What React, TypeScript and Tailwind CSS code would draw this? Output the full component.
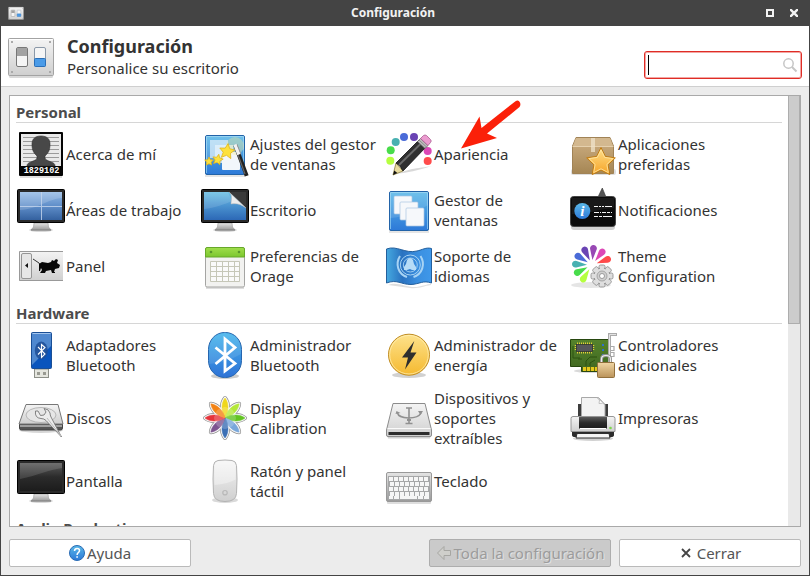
import React from "react";
import type { ReactNode } from "react";

const starPoints = (cx: number, cy: number, r: number, inner = 0.48, turn = 0) =>
  Array.from({ length: 10 }, (_, i) => {
    const a = ((i * 36 - 90 + turn) * Math.PI) / 180;
    const d = i % 2 ? r * inner : r;
    return `${(cx + d * Math.cos(a)).toFixed(1)},${(cy + d * Math.sin(a)).toFixed(1)}`;
  }).join(" ");

function Gradient({ id, from, to, mid }: { id: string; from: string; to: string; mid?: string }) {
  return (
    <linearGradient id={id} x1="0" y1="0" x2="0" y2="1">
      <stop offset="0" stopColor={from} />
      {mid && <stop offset="0.5" stopColor={mid} />}
      <stop offset="1" stopColor={to} />
    </linearGradient>
  );
}

function Gradients() {
  return (
    <svg width="0" height="0" className="absolute" aria-hidden="true">
      <defs>
        <Gradient id="blue" from="#5bb9e8" to="#2d79d8" />
        <Gradient id="space" from="#94bae5" mid="#5f8ec9" to="#34619f" />
        <Gradient id="desk" from="#6cc0e4" mid="#4a92cf" to="#2c68b6" />
        <Gradient id="dark" from="#5a5a5a" mid="#2b2b2b" to="#1c1c1c" />
        <Gradient id="silver" from="#f4f4f4" to="#cfcfcf" />
        <Gradient id="steel" from="#e4e4e4" to="#9a9a9a" />
        <Gradient id="gold" from="#ffe08a" to="#f6a326" />
        <Gradient id="power" from="#fde28c" to="#f5b92f" />
        <Gradient id="card" from="#cfb084" to="#a58654" />
        <Gradient id="lock" from="#f0d6a4" to="#bb935a" />
        <Gradient id="green" from="#a0de4c" to="#7cc62e" />
        <Gradient id="board" from="#55832c" to="#3f6620" />
        <Gradient id="bt" from="#46b6ec" to="#2f72d6" />
        <linearGradient id="flag" x1="0" y1="0" x2="1" y2="0">
          <stop offset="0" stopColor="#45a9e0" />
          <stop offset="0.35" stopColor="#2a72c0" />
          <stop offset="0.7" stopColor="#3a8fe0" />
          <stop offset="1" stopColor="#3f98ea" />
        </linearGradient>
      </defs>
    </svg>
  );
}

function Art({ children, className = "size-12" }: { children: ReactNode; className?: string }) {
  return (
    <svg viewBox="0 0 48 48" className={`${className} shrink-0 overflow-visible`} aria-hidden="true">
      {children}
    </svg>
  );
}

function SettingsIcon({ className }: { className?: string }) {
  return (
    <Art className={className}>
      <rect x="2" y="8" width="44" height="38" rx="1.5" fill="#000" opacity="0.15" />
      <rect x="1.5" y="6.5" width="45" height="37" rx="1" fill="url(#silver)" stroke="#a3a3a3" />
      <path d="M2.5 7.5h43" stroke="#fff" />
      {[[5, 10], [43, 10], [5, 40], [43, 40]].map(([x, y]) => (
        <rect key={`${x}-${y}`} x={x - 1} y={y - 1} width="2" height="2" fill="#aaa" />
      ))}
      <rect x="9.5" y="15.5" width="11" height="19" rx="1.5" fill="#f5f5f5" stroke="#777" />
      <rect x="10" y="16" width="10" height="8" fill="#a2a2a2" />
      <rect x="27.5" y="15.5" width="11" height="19" rx="1.5" fill="#f5f5f5" stroke="#8a98a8" />
      <rect x="27.5" y="26.5" width="11" height="8" rx="1" fill="#4a9be8" stroke="#2a6fb8" />
    </Art>
  );
}

function AboutIcon() {
  return (
    <Art>
      <rect x="3" y="42" width="42" height="5" fill="#000" opacity="0.12" />
      <rect x="2" y="1" width="44" height="44" rx="1" fill="#050505" />
      <rect x="4" y="3" width="40" height="32" fill="#e9e9e9" />
      <path d="M6 6.5h36M6 10.5h36M6 14.5h36M6 18.5h36M6 22.5h36M6 26.5h36M6 30.5h36" stroke="#9a9a9a" />
      <path d="M24 5c-6 0-9 3-9 8 0 7 2 9 5 12 .5 4-2 4-6 6-3 1-4 2-4 4h28c0-2-1-3-4-4-4-2-6.5-2-6-6 3-3 5-5 5-12 0-5-3-8-9-8z" fill="#484848" stroke="#2e2e2e" strokeWidth="0.6" />
      <text x="24.5" y="42" textAnchor="middle" fontFamily="Liberation Mono, monospace" fontWeight="700" fontSize="8.5" fill="#fff">1829102</text>
    </Art>
  );
}

function Monitor({ screen, children }: { screen: string; children?: ReactNode }) {
  return (
    <Art>
      <ellipse cx="24" cy="43" rx="12" ry="2" fill="#000" opacity="0.15" />
      <path d="M17 36h14l.5 4 2.500 3H14l2.500-3z" fill="url(#steel)" stroke="#999" strokeWidth="0.6" />
      <path d="M14 43h20" stroke="#888" strokeWidth="1.2" />
      <rect x="0.5" y="2.5" width="47" height="33" rx="1" fill="#2a2a2a" stroke="#000" />
      <rect x="3" y="5" width="42" height="28" fill={screen} />
      {children}
    </Art>
  );
}

function WorkspacesIcon() {
  return (
    <Monitor screen="url(#space)">
      <path d="M3 5h42v6C30 12 22 22 3 23z" fill="#fff" opacity="0.16" />
      <path d="M24.500 5v28M3 19.500h42" stroke="#c6d7ee" strokeWidth="1" opacity="0.8" />
    </Monitor>
  );
}

function DesktopIcon() {
  return (
    <Monitor screen="url(#desk)">
      <path d="M3 5h24l4 9C24 17 14 21 3 22z" fill="#fff" opacity="0.12" />
      <path d="M28 5h17v16z" fill="#3a3a3a" />
      <path d="M28 5c4 3 2 8 2 12 5-1 10 0 15 4z" fill="#ededed" stroke="#b5b5b5" strokeWidth="0.5" />
    </Monitor>
  );
}

function DisplayIcon() {
  return (
    <Monitor screen="url(#dark)">
      <path d="M3 5h42v5C31 12 22 17 3 21z" fill="#fff" opacity="0.13" />
    </Monitor>
  );
}

function PanelIcon() {
  return (
    <Art>
      <rect x="2" y="8" width="44" height="30" fill="url(#silver)" />
      <path d="M46 8.500H2.500v29H46" fill="none" stroke="#999" />
      <rect x="4.500" y="10.500" width="10" height="25" rx="1.5" fill="#e6e6e6" stroke="#959595" />
      <path d="M11 20v5l-3-2.500z" fill="#111" />
      <path d="M16 16l6 4 2 3" stroke="#333" strokeWidth="1" fill="none" />
      <path d="M22 21l3-2 6 1 3-1 1-2 2 1 2-2 2 1-1 3 3 2-1 3-4 1-1 3h1v1h-3l-1-3-5 1-1 2h-5l2-3-1-2-1 3h-1z" fill="#080808" />
    </Art>
  );
}

function BlueTile() {
  return (
    <>
      <rect x="4" y="42" width="40" height="4" fill="#000" opacity="0.1" />
      <rect x="4.500" y="4.500" width="39" height="39" rx="1.5" fill="url(#blue)" stroke="#2263a8" />
      <path d="M5.500 42V5.500h37V42" fill="none" stroke="#9bd6f4" opacity="0.7" />
      <path d="M5 5h38v13C32 25 20 30 5 31z" fill="#fff" opacity="0.12" />
    </>
  );
}

function WindowTweaksIcon() {
  return (
    <Art>
      <BlueTile />
      <rect x="9" y="9" width="18" height="18" fill="#e4f1fb" opacity="0.7" />
      <rect x="14" y="14" width="18" height="18" fill="#e4f1fb" opacity="0.8" />
      <rect x="21" y="21" width="18" height="18" rx="1" fill="#f2f6fb" />
      <circle cx="34" cy="15" r="9" fill="#f8ef92" opacity="0.35" />
      {[[26, 20.5, 8, 8], [16.7, 28.7, 5.5, 12], [8, 30.5, 4.5, 0]].map(([x, y, r, t]) => (
        <polygon key={x} points={starPoints(x, y, r, 0.48, t)} fill="#fde13d" stroke="#dfb41c" strokeWidth="0.8" />
      ))}
      <path d="M35 16l10 27" stroke="#222" strokeWidth="4" strokeLinecap="square" />
      <path d="M34.500 17l9.500 26" stroke="#666" strokeWidth="1.2" />
      <path d="M34 13.500l4 10" stroke="#f2f2f2" strokeWidth="3.5" />
      <path d="M36 13.500l4 10" stroke="#999" strokeWidth="0.8" />
    </Art>
  );
}

function WindowManagerIcon() {
  return (
    <Art>
      <BlueTile />
      {[9, 15, 21].map((p) => (
        <rect key={p} x={p} y={p} width="18" height="18" rx="1" fill="#f6f8fb" stroke="#a9c6e2" strokeWidth="0.7" />
      ))}
    </Art>
  );
}

function CalendarIcon() {
  return (
    <Art>
      <rect x="5" y="42" width="38" height="4" fill="#000" opacity="0.13" />
      <rect x="4.500" y="5" width="39" height="39" rx="1.5" fill="#f2f2f0" stroke="#a5a5a3" />
      <path d="M4.500 14V6q0-1.500 1.500-1.500h36q1.500 0 1.500 1.500v8z" fill="url(#green)" stroke="#67a82a" />
      <circle cx="10" cy="9" r="1.3" fill="#58952a" />
      <circle cx="38" cy="9" r="1.3" fill="#58952a" />
      <rect x="9.500" y="18.500" width="29" height="20" fill="#fafafa" />
      <path d="M9.500 18.500h29v20h-29zM9.500 23.500h29M9.500 28.500h29M9.500 33.500h29M15.500 18.500v20M21.500 18.500v20M27.500 18.500v20M33.500 18.500v20" fill="none" stroke="#c6c7b8" />
    </Art>
  );
}

function AppearanceIcon() {
  const dots: [number, number, string][] = [
    [5.3, 29.7, "#b5ff40"], [5.7, 19.3, "#48dc4b"], [10.7, 11, "#48b1b1"], [19, 6, "#4a6bd8"],
    [29, 6, "#6a44b4"], [42.7, 20, "#dc48b6"], [42.7, 30, "#ff4b4b"],
  ];
  return (
    <Art>
      {dots.map(([x, y, c]) => <circle key={c} cx={x} cy={y} r="4" fill={c} />)}
      <path d="M9 43c12-1 26-4 38-8-6 1-15 2-20 3z" fill="#000" opacity="0.15" />
      <path d="M8 44l3-12 7 8z" fill="#e9dc9e" stroke="#8a7c3c" strokeWidth="0.8" />
      <path d="M8 44l1.300-4.500 3 2.500z" fill="#111" />
      <path d="M11 32l23-23 7 7-23 24-3-5z" fill="#303030" stroke="#111" strokeWidth="0.8" />
      <path d="M14 34l23-22.500" stroke="#6b6b6b" strokeWidth="1.8" />
      <path d="M32.500 10.500l3-3 7.500 7-3 3z" fill="#bcbcbc" stroke="#666" strokeWidth="0.8" />
      <path d="M34 9l7.500 7" stroke="#777" strokeWidth="0.7" />
      <path d="M35.500 7.500l3-3q1.500-1 3 0l4 4q1.500 1.500 0 3l-2.500 3z" fill="#eb9bcf" stroke="#a95c90" strokeWidth="0.8" />
    </Art>
  );
}

function LanguageIcon() {
  return (
    <Art>
      <path d="M3 42c10-4 18 3 29 2 6-1 10-3 14-3v1c-8 1-12 4-21 3z" fill="#000" opacity="0.13" />
      <path d="M1.500 6C12 2 20 11 32 8c5-1 9-4 14.500-2.500V40C38 37 35 41 26 41.500 16 41.500 12 36 1.500 40z" fill="url(#flag)" stroke="#245f9c" />
      <g fill="none" stroke="#a7d3f4" strokeWidth="1.4">
        <path d="M15 13c-5 8-2 18 7 21M35.500 13c5 8 2 18-7 21" strokeWidth="2" />
        <circle cx="25.3" cy="22" r="10" strokeWidth="1" />
        <circle cx="25.3" cy="22" r="7" strokeWidth="0.9" />
      </g>
      <path d="M22 17q3-4 6 0l1 4 2 3v3h-4l-2-1-3 1h-3v-3l2-3z" fill="#b7dcf7" />
    </Art>
  );
}

function PreferredAppsIcon() {
  return (
    <Art>
      <rect x="2" y="38" width="45" height="6" rx="2" fill="#000" opacity="0.13" />
      <path d="M7 6.500h34L44.500 15v27.500h-41V15z" fill="url(#card)" stroke="#a18356" />
      <path d="M7 7h34l3 8H4z" fill="#d3b88f" />
      <path d="M3.500 15.500h41" stroke="#e5d0ad" />
      <path d="M22 7h4v14h-4z" fill="#efe3cb" opacity="0.75" />
      <polygon points={starPoints(32, 31.5, 15, 0.5)} fill="url(#gold)" stroke="#c17c13" strokeWidth="1" strokeLinejoin="round" />
      <polygon points={starPoints(32, 31.5, 12.5, 0.5)} fill="none" stroke="#ffe9a8" strokeWidth="0.8" />
    </Art>
  );
}

function NotificationsIcon() {
  return (
    <Art>
      <rect x="2" y="36" width="44" height="7" rx="3" fill="#000" opacity="0.18" />
      <path d="M29 10l4.300-9L37 10z" fill="#555" stroke="#333" strokeWidth="0.6" />
      <rect x="1.500" y="9.500" width="45" height="30" rx="3" fill="#0b0b0b" stroke="#444" />
      <path d="M3 11h42v10C30 22 20 27 3 27z" fill="#fff" opacity="0.06" />
      <circle cx="13.3" cy="24" r="8" fill="url(#blue)" />
      <text x="13.3" y="29" textAnchor="middle" fontFamily="Liberation Serif, serif" fontStyle="italic" fontWeight="700" fontSize="15" fill="#fff">i</text>
      <g stroke="#f3f3f3" strokeWidth="1">
        <path d="M25 19.500h18" strokeDasharray="4 1 2 1 2 1 7 1" />
        <path d="M25 25.500h18" strokeDasharray="5 1 1 1 4 1 3 1 1 1" />
        <path d="M25 29.500h18" strokeDasharray="4 1 3 1 9 1" />
      </g>
    </Art>
  );
}

function ThemeIcon() {
  const petals: [number, string][] = [
    [70, "#ff4b4b"], [38, "#dc48b6"], [5, "#9848b4"], [-26, "#6a44b4"],
    [-58, "#4a6bd8"], [-87, "#48b1b1"], [-117, "#48dc4b"], [-148, "#b5ff40"],
  ];
  return (
    <Art>
      <ellipse cx="22" cy="42" rx="20" ry="3" fill="#000" opacity="0.1" />
      {petals.map(([a, c]) => (
        <path key={c} d="M23 17l-3.200-10.500a3.400 3.400 0 1 1 6.400 0z" fill={c} transform={`rotate(${a} 23 22)`} />
      ))}
      <g stroke="#898989" strokeWidth="0.8" fill="#dedede">
        {[0, 45, 90, 135].map((a) => (
          <rect key={a} x="30" y="22" width="6" height="22" rx="1.5" transform={`rotate(${a} 33 33)`} />
        ))}
        <circle cx="33" cy="33" r="8" />
      </g>
      {[0, 45, 90, 135].map((a) => (
        <rect key={a} x="31" y="23" width="4" height="20" fill="#dedede" transform={`rotate(${a} 33 33)`} />
      ))}
      <circle cx="33" cy="33" r="5" fill="#cfcfcf" stroke="#999" strokeWidth="0.8" />
      <circle cx="33" cy="33" r="2.500" fill="#fff" stroke="#888" strokeWidth="0.8" />
    </Art>
  );
}

function BluetoothStickIcon() {
  return (
    <Art>
      <rect x="17.500" y="37" width="14" height="8.500" fill="#e5e6df" stroke="#8d8f88" />
      <path d="M20 40h3v3h-3zM26 40h3v3h-3z" fill="#999a92" />
      <rect x="14.500" y="0.500" width="20" height="36" rx="1" fill="#0a55bd" stroke="#1a4f96" />
      <path d="M15 1h19v13L15 33z" fill="#4f88cf" />
      <path d="M15.500 1.500h18" stroke="#a5c6ee" />
      <ellipse cx="24.3" cy="18.500" rx="6.500" ry="9" fill="#1f4f96" opacity="0.85" />
      <path d="M21 15l7 7-3.500 3.500v-13L28 15.500l-7 7" fill="none" stroke="#fff" strokeWidth="1.1" />
    </Art>
  );
}

function BluetoothIcon() {
  return (
    <Art>
      <ellipse cx="24" cy="44" rx="14" ry="3" fill="#000" opacity="0.2" />
      <rect x="7.500" y="0.500" width="33" height="45" rx="16" ry="17" fill="url(#bt)" stroke="#2565ae" />
      <path d="M8 18Q9 1 24 1t16 17v4C30 28 18 31 8 32z" fill="#fff" opacity="0.1" />
      <path d="M14.500 15.500L34 31.500 24 39V7l10 8.500L14.500 32" fill="none" stroke="#fff" strokeWidth="2.8" />
    </Art>
  );
}

function PowerIcon() {
  return (
    <Art>
      <ellipse cx="24" cy="43" rx="17" ry="3" fill="#000" opacity="0.18" />
      <circle cx="24" cy="22.7" r="20.5" fill="url(#power)" stroke="#c08d23" />
      <circle cx="24" cy="22.7" r="19.3" fill="none" stroke="#ffedb0" strokeWidth="0.8" />
      <path d="M29.300 9L17 25.500h6L20 37.500 31.500 20.500h-6z" fill="#2e2e2e" />
    </Art>
  );
}

function DriversIcon() {
  return (
    <Art>
      <ellipse cx="24" cy="39" rx="19" ry="2" fill="#000" opacity="0.15" />
      <path d="M1.500 7.500h38v32H12.500v-5h-11z" fill="url(#board)" stroke="#27470f" />
      <path d="M14 35h15v4H14z" fill="#e5c91b" />
      <path d="M17.500 35v4M21.500 35v4M25.500 35v4" stroke="#6d6a10" />
      <path d="M4 14v12h7M17 34v-5l4-4h7M21 34v-3l5-3M13 27h-4" fill="none" stroke="#2c5210" />
      <path d="M8 11.500h15M8 20.500h15" stroke="#e6cf3a" strokeWidth="2" strokeDasharray="1 1" />
      <path d="M6.500 13v6M24.500 13v6" stroke="#e6cf3a" strokeWidth="1.5" strokeDasharray="1 1" />
      <rect x="7.500" y="12.500" width="16" height="7" fill="#56575b" stroke="#2d2d2d" strokeWidth="0.7" />
      <path d="M33 12h2v2h-2zM33 17h2v2h-2zM33 22h2v2h-2z" fill="#2f6fd0" />
      <path d="M40.500 33V2.500H48" fill="none" stroke="#aaa" strokeWidth="3" />
      <path d="M40.500 33V2.500H47" fill="none" stroke="#e2e2e2" strokeWidth="1" />
      <path d="M42 14.500h3v4h-3M42 20.500h3v4h-3" fill="none" stroke="#aaa" strokeWidth="1.2" />
      <path d="M32.500 31v-4q0-3.500 4.500-3.500t4.500 3.500v4" fill="none" stroke="#929292" strokeWidth="3" />
      <path d="M32.500 31v-4q0-3.500 4.500-3.500t4.500 3.500v4" fill="none" stroke="#eee" strokeWidth="1.2" />
      <rect x="28.500" y="30.500" width="17" height="15" rx="1" fill="url(#lock)" stroke="#92703d" />
    </Art>
  );
}

function DisksIcon() {
  return (
    <Art>
      <ellipse cx="24" cy="35" rx="22" ry="3" fill="#000" opacity="0.16" />
      <path d="M2.500 29h43v4q0 2-2 2h-39q-2 0-2-2z" fill="#555" stroke="#444" />
      <path d="M3 31h42" stroke="#b8b8b8" strokeWidth="1.5" />
      <path d="M9 9.500h32l5 19.500H2z" fill="url(#silver)" stroke="#777" strokeLinejoin="round" />
      <ellipse cx="24" cy="20" rx="15" ry="7.500" fill="#e6e6e6" stroke="#a9a9a9" strokeWidth="0.8" />
      <path d="M18.500 16q-1 7 5.500 7.500 3 0 5 2l15.500 16.500L34 22q-1-2-1-4-1-4-6-4.500l2 3.500-2 3-3.500.500-2.500-4.500z" fill="#ececec" stroke="#777" strokeWidth="0.9" strokeLinejoin="round" />
      <path d="M30 23l14 18" stroke="#bdbdbd" strokeWidth="1" />
    </Art>
  );
}

function CalibrationIcon() {
  const colors = ["#efd71c", "#b4e83a", "#62c422", "#79a7da", "#3b6fb5", "#7d5590", "#e5343b", "#f38315"];
  const petal = "M24 23C20 16 20 8 24 3 28 8 28 16 24 23z";
  return (
    <Art>
      {colors.map((c, i) => <path key={c} d={petal} fill="none" stroke="#8f8f8f" strokeWidth="4" strokeLinejoin="round" transform={`rotate(${i * 45} 24 23)`} />)}
      {colors.map((c, i) => <path key={c} d={petal} fill="#fff" stroke="#f8f8f8" strokeWidth="2.6" strokeLinejoin="round" transform={`rotate(${i * 45} 24 23)`} />)}
      {colors.map((c, i) => (
        <g key={c} transform={`rotate(${i * 45} 24 23)`}>
          <path d={petal} fill={c} stroke={c} strokeWidth="0.5" />
          <path d="M24 23C21 18 21 15 21 13q3-2 6 0C27 15 27 18 24 23z" fill="#fff" opacity="0.2" />
        </g>
      ))}
    </Art>
  );
}

function RemovableIcon() {
  return (
    <Art>
      <path d="M2 39h44l-1 4.500H3z" fill="#000" opacity="0.18" />
      <path d="M8 8.500h32L46.500 35v5q0 1.500-1.500 1.500H3q-1.500 0-1.500-1.500v-5z" fill="url(#silver)" stroke="#8c8c8c" />
      <path d="M2.500 33.500h43" stroke="#fafafa" />
      <path d="M3.500 37h41v3h-41z" fill="#2d2d2d" />
      <g fill="none" stroke="#909090" strokeWidth="1.6">
        <path d="M24 12.500v16M20.500 28.500h7M21 13h6M12.500 18q1 4.500 11 5 10 0 12.500-5" />
      </g>
      <path d="M10.500 19l1-3 4 2zM33 16h5l-2.500 4zM22 24h4v2h-4z" fill="#909090" />
    </Art>
  );
}

function PrinterIcon() {
  return (
    <Art>
      <ellipse cx="24" cy="43.5" rx="20" ry="2.500" fill="#000" opacity="0.18" />
      <path d="M9 9h4v14H9zM35 9h4v14h-4z" fill="#3d3d3d" />
      <path d="M12.500 2.500h17l6.500 7v14H12.500z" fill="#f3f3f3" stroke="#a8a8a8" />
      <path d="M28 2.500q4 2 2 6 4-1 6 1z" fill="#fff" stroke="#b5b5b5" strokeWidth="0.8" />
      <path d="M3 35h42v5q0 2-3 2H6q-3 0-3-2z" fill="#2b2b2b" />
      <path d="M4 21.500h40q2 0 2 2v13H2v-13q0-2 2-2z" fill="url(#silver)" stroke="#969696" />
      <rect x="10" y="22" width="28" height="11.500" fill="url(#dark)" />
      <path d="M11 33.500h26" stroke="#fff" />
      <path d="M8 38.500h32l1 4.500H7z" fill="#f5f5f5" stroke="#2f2f2f" />
      <circle cx="41.500" cy="33" r="1.3" fill="#7cd84a" />
    </Art>
  );
}

function MouseIcon() {
  return (
    <Art>
      <ellipse cx="24" cy="42" rx="13" ry="3" fill="#000" opacity="0.15" />
      <path d="M17 2.500q7-1 14 0 4 .5 4.500 5 1 13 0 28-.5 8-11.500 8t-11.500-8q-1-15 0-28Q13 3 17 2.500z" fill="url(#silver)" stroke="#b3b3b3" />
      <path d="M17 3.500q7-1 14 0 3 .5 3.500 4 .5 8 0 14Q26 26 13.500 27q-.5-10 0-20 .5-3 3.500-3.500z" fill="#fff" opacity="0.35" />
      <circle cx="24" cy="34.7" r="2.2" fill="none" stroke="#b8b8b8" strokeWidth="1.2" />
    </Art>
  );
}

function KeyboardIcon() {
  return (
    <Art>
      <rect x="2" y="41" width="44" height="5" rx="1" fill="#000" opacity="0.13" />
      <rect x="1.500" y="14.500" width="45" height="29" rx="1.5" fill="url(#steel)" stroke="#999" />
      <rect x="3" y="18" width="42" height="24" fill="#a6a7a8" />
      {[0, 1, 2, 3].map((r) =>
        Array.from({ length: 8 }, (_, c) => (
          <rect key={`${r}-${c}`} x={4 + c * 5 + (r % 2)} y={19 + r * 5} width="4" height="4" fill="#f6f6f6" />
        )),
      )}
      <path d="M4 38h4v3H4zM9 38h5v3H9zM15 38h17v3H15zM33 38h5v3h-5zM39 38h5v3h-5z" fill="#f6f6f6" />
    </Art>
  );
}

type Item = { label: string; icon: ReactNode };

const sections: { title: string; items: Item[] }[] = [
  {
    title: "Personal",
    items: [
      { label: "Acerca de mí", icon: <AboutIcon /> },
      { label: "Ajustes del gestor de ventanas", icon: <WindowTweaksIcon /> },
      { label: "Apariencia", icon: <AppearanceIcon /> },
      { label: "Aplicaciones preferidas", icon: <PreferredAppsIcon /> },
      { label: "Áreas de trabajo", icon: <WorkspacesIcon /> },
      { label: "Escritorio", icon: <DesktopIcon /> },
      { label: "Gestor de ventanas", icon: <WindowManagerIcon /> },
      { label: "Notificaciones", icon: <NotificationsIcon /> },
      { label: "Panel", icon: <PanelIcon /> },
      { label: "Preferencias de Orage", icon: <CalendarIcon /> },
      { label: "Soporte de idiomas", icon: <LanguageIcon /> },
      { label: "Theme Configuration", icon: <ThemeIcon /> },
    ],
  },
  {
    title: "Hardware",
    items: [
      { label: "Adaptadores Bluetooth", icon: <BluetoothStickIcon /> },
      { label: "Administrador Bluetooth", icon: <BluetoothIcon /> },
      { label: "Administrador de energía", icon: <PowerIcon /> },
      { label: "Controladores adicionales", icon: <DriversIcon /> },
      { label: "Discos", icon: <DisksIcon /> },
      { label: "Display Calibration", icon: <CalibrationIcon /> },
      { label: "Dispositivos y soportes extraíbles", icon: <RemovableIcon /> },
      { label: "Impresoras", icon: <PrinterIcon /> },
      { label: "Pantalla", icon: <DisplayIcon /> },
      { label: "Ratón y panel táctil", icon: <MouseIcon /> },
      { label: "Teclado", icon: <KeyboardIcon /> },
    ],
  },
  { title: "Audio Production", items: [] },
];

function TitleBar() {
  return (
    <header className="relative flex h-[26px] shrink-0 items-center justify-between bg-[#444444] pr-[11px] pl-[7px] text-[#f2f2f2]">
      <SettingsIcon className="size-4" />
      <h1 className="absolute inset-x-0 pr-6 text-center text-[12px] leading-4 font-bold">Configuración</h1>
      <div className="relative flex items-center gap-4">
        <button aria-label="Maximizar" className="block size-2 border-2 border-[#f2f2f2]" />
        <button aria-label="Cerrar ventana" className="block size-2">
          <svg viewBox="0 0 8 8" className="size-2" aria-hidden="true">
            <path d="M0 0l8 8M8 0l-8 8" stroke="#f2f2f2" strokeWidth="2.4" />
          </svg>
        </button>
      </div>
    </header>
  );
}

function Section({ title, items }: { title: string; items: Item[] }) {
  return (
    <section className="pb-[13px]">
      <h3 className="border-b border-[#d6d6d6] text-[15px] leading-[19px] font-bold text-[#4c4c4c]">{title}</h3>
      <div className="grid grid-cols-[repeat(auto-fill,184px)] gap-y-2 pt-2 pl-px">
        {items.map(({ label, icon }) => (
          <button key={label} className="flex min-h-12 items-center gap-px text-left">
            {icon}
            <span className="w-[126px] pb-[2px]">{label}</span>
          </button>
        ))}
      </div>
    </section>
  );
}

export default function App() {
  return (
    <div className="relative flex h-screen flex-col overflow-hidden border-x border-b border-[#444444] bg-[#ececec] font-['Noto_Sans',sans-serif] text-[15px] leading-5 text-[#333333]">
      <Gradients />
      <TitleBar />
      <div className="flex h-[61px] shrink-0 items-center border-b border-[#cfcfcf] bg-white pr-[7px] pl-[6px]">
        <SettingsIcon className="size-12" />
        <div className="ml-3 flex-1">
          <h2 className="text-[18px] leading-6 font-bold">Configuración</h2>
          <p className="leading-5">Personalice su escritorio</p>
        </div>
        <div className="relative mt-[18px] w-[158px]">
          <input
            type="text"
            aria-label="Buscar"
            className="block h-7 w-full rounded-[3px] border border-[#df2d26] bg-white pr-7 pl-2 caret-transparent ring-1 ring-[#f3a6a3] outline-none ring-inset"
          />
          <span className="absolute top-1 left-1 h-5 w-px bg-black" />
          <svg viewBox="0 0 16 16" className="absolute top-[6px] right-1 size-4" aria-hidden="true">
            <circle cx="6.500" cy="6.500" r="4.700" fill="none" stroke="#c6c6c6" strokeWidth="1.5" />
            <path d="M10 10l4.500 4.500" stroke="#c6c6c6" strokeWidth="2" />
          </svg>
        </div>
      </div>
      <div className="flex min-h-0 flex-1 flex-col gap-3 p-2">
        <main className="flex min-h-0 flex-1 overflow-hidden border border-[#a9a9a9] bg-white">
          <div className="flex-1 overflow-hidden px-[6px] pt-[7px]">
            {sections.map((s) => <Section key={s.title} {...s} />)}
          </div>
          <div className="w-3 bg-[#e9e9e9]">
            <div className="h-[53%] border border-t-0 border-[#adadad] bg-[#cccccc]" />
          </div>
        </main>
        <footer className="flex shrink-0 gap-2 text-[#555555]">
          <button className="mr-auto flex h-7 w-[182px] items-center justify-center gap-[2px] rounded-[2px] border border-[#bababa] bg-white">
            <svg viewBox="0 0 16 16" className="size-4" aria-hidden="true">
              <circle cx="8" cy="8" r="7.500" fill="url(#blue)" stroke="#2a6cb4" />
              <path d="M5.500 6q.2-2.500 2.600-2.500 2.400 0 2.400 2.100 0 1.200-1.200 2T8.100 10" fill="none" stroke="#fff" strokeWidth="1.5" />
              <path d="M7.300 11.200h1.600v1.600H7.300z" fill="#fff" />
            </svg>
            Ayuda
          </button>
          <button disabled className="flex h-7 w-[182px] items-center justify-center gap-[2px] rounded-[2px] border border-[#adadad] bg-[#cacaca] text-[#9c9c9c] [text-shadow:1px_1px_#e2e2e2]">
            <svg viewBox="0 0 16 16" className="size-4" aria-hidden="true">
              <path d="M1.500 8L8 1.500v4h6.500v5H8v4z" fill="#cfcfcb" stroke="#a6a6a2" />
            </svg>
            Toda la configuración
          </button>
          <button className="flex h-7 w-[182px] items-center justify-center gap-[6px] rounded-[2px] border border-[#bababa] bg-white pl-[2px]">
            <svg viewBox="0 0 10 10" className="size-[10px]" aria-hidden="true">
              <path d="M1 1l8 8M9 1l-8 8" stroke="#444" strokeWidth="1.8" />
            </svg>
            Cerrar
          </button>
        </footer>
      </div>
      <svg viewBox="0 0 60 50" className="pointer-events-none absolute top-[100px] left-[459px] h-[50px] w-[60px] overflow-visible" aria-hidden="true">
        <path d="M1 48.500L19.500 16.500 21.500 28 55.500 1.200Q58.500-.5 60 2.500q1 2.500-.5 4.500L27 33.500l10 4.500z" fill="#fb2009" />
      </svg>
    </div>
  );
}
